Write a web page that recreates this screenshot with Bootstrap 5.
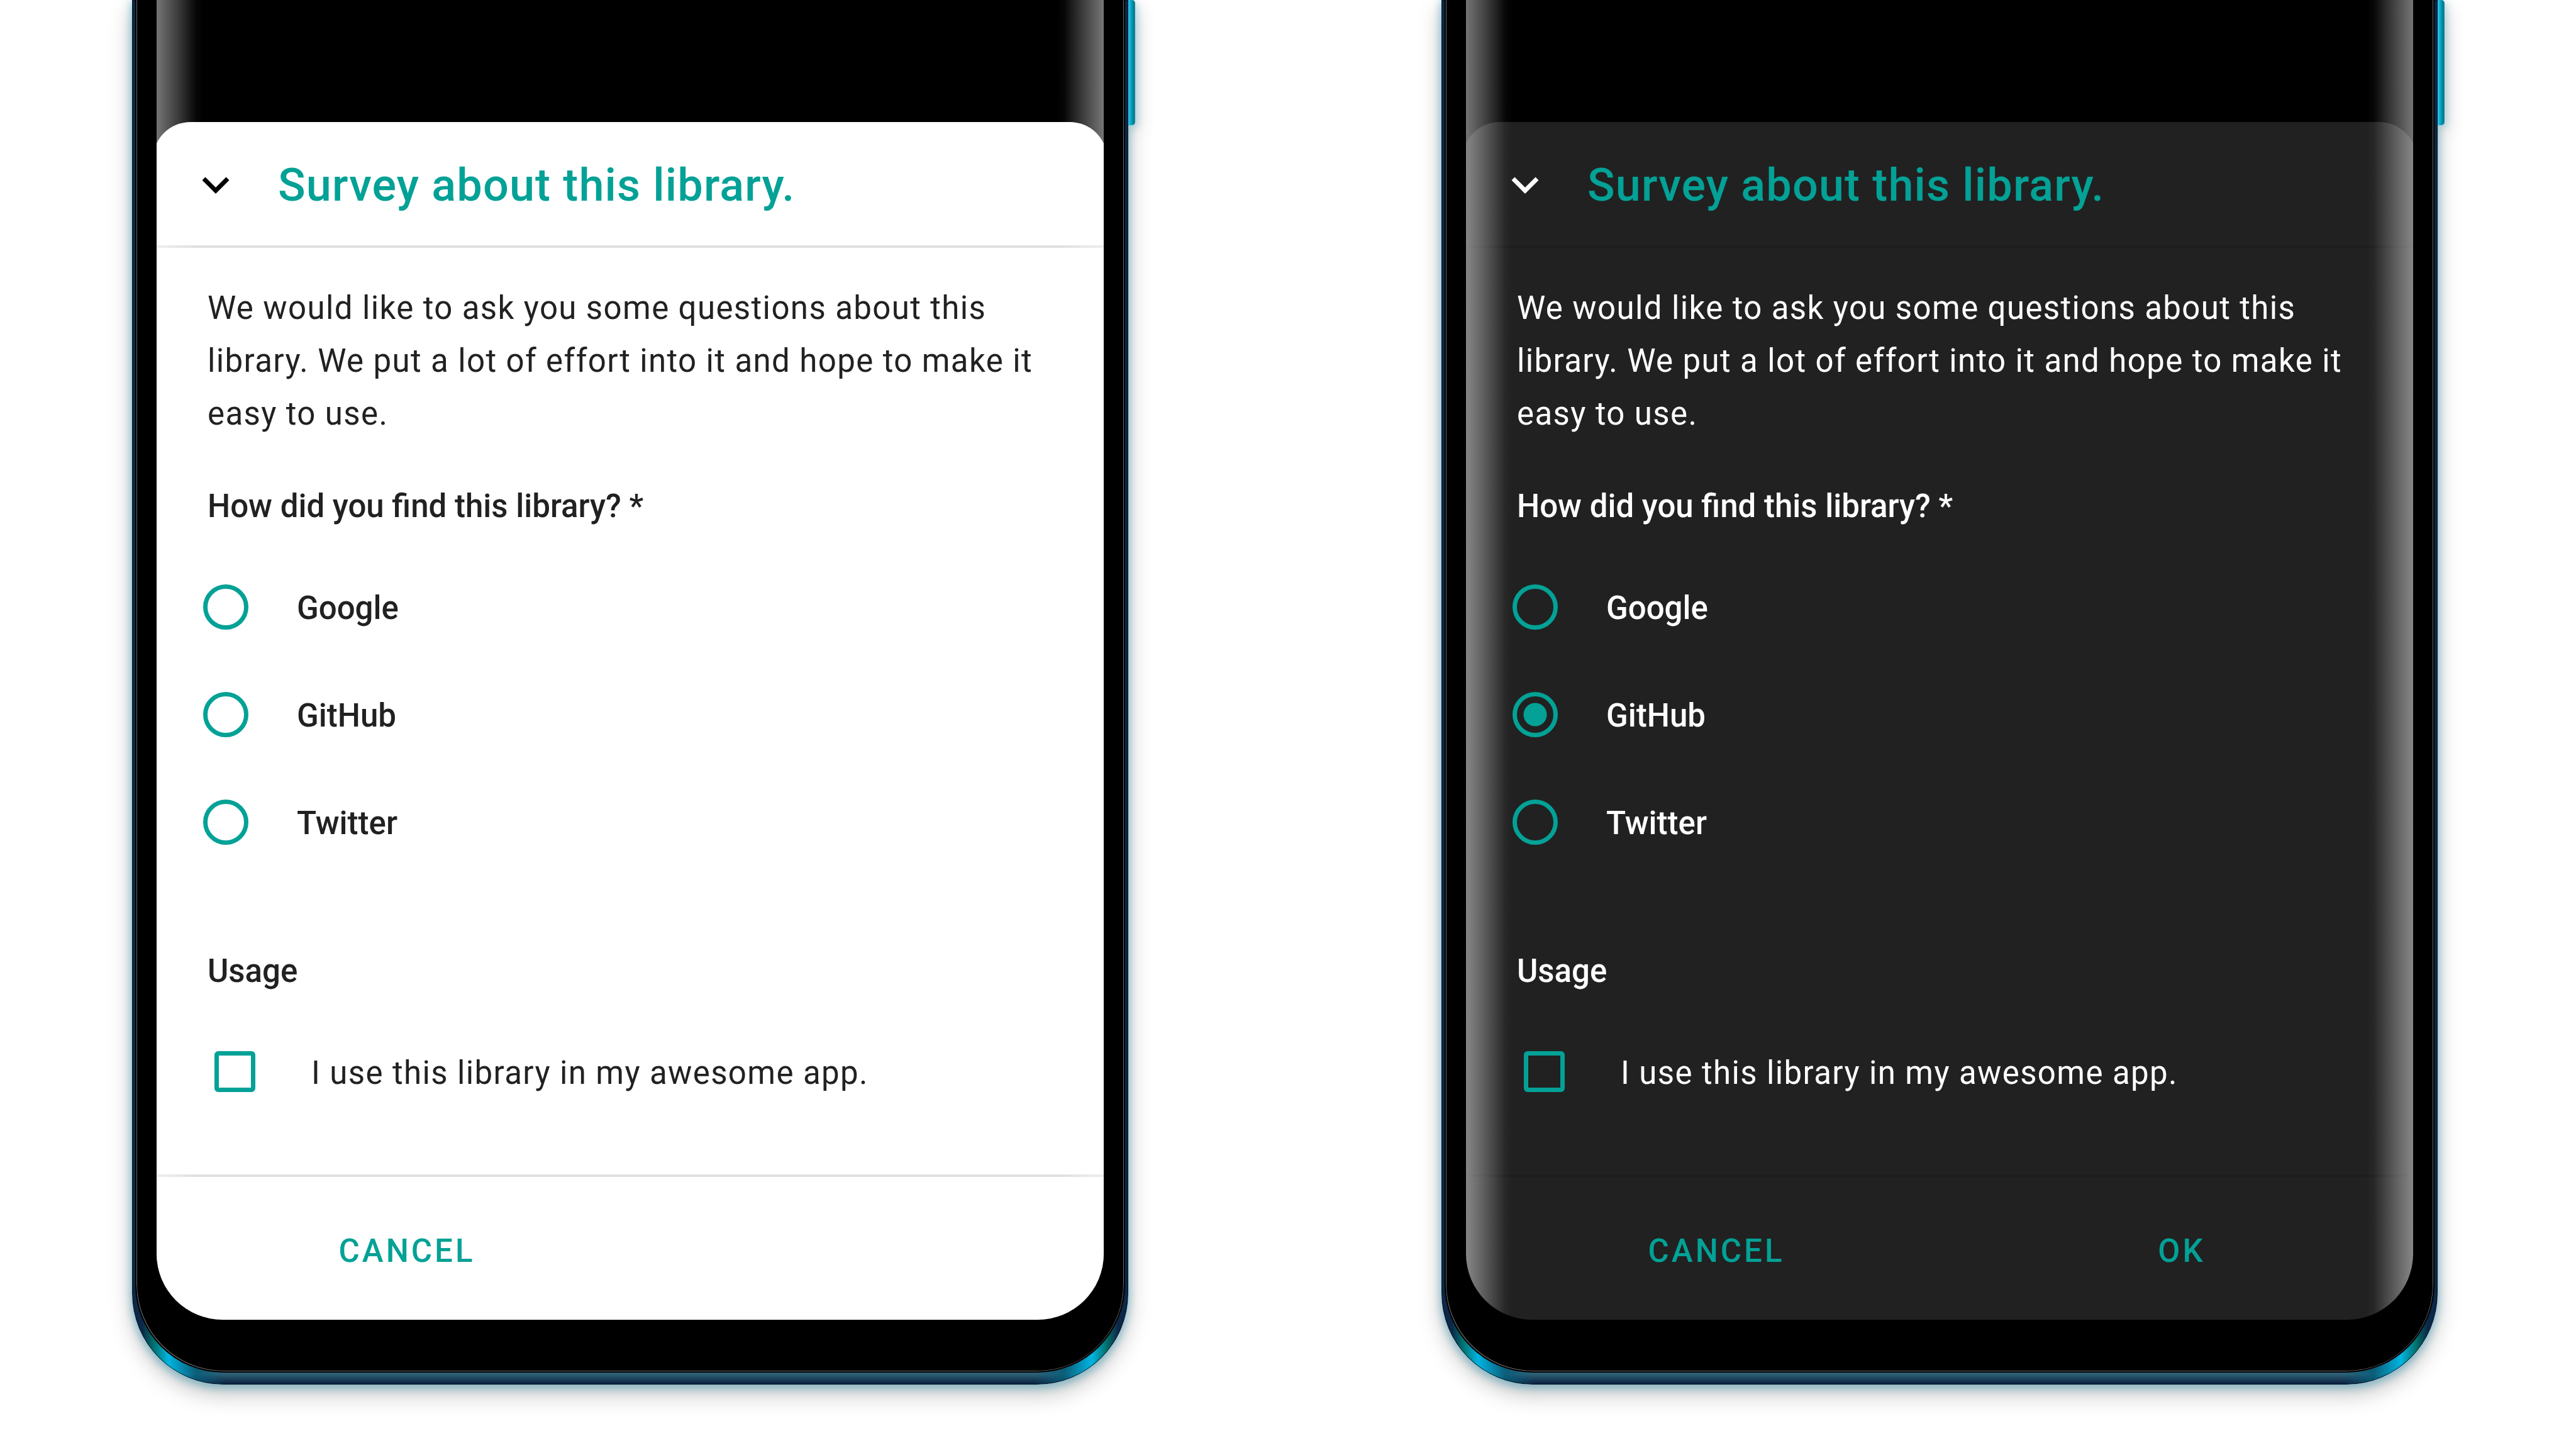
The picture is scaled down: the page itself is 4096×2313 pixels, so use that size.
<!DOCTYPE html>
<html lang="en">
<head>
<meta charset="utf-8">
<meta name="viewport" content="width=device-width, initial-scale=1">
<title>Survey about this library</title>
<link href="https://cdn.jsdelivr.net/npm/bootstrap@5.3.0/dist/css/bootstrap.min.css" rel="stylesheet">
<script src="https://cdn.jsdelivr.net/npm/bootstrap@5.3.0/dist/js/bootstrap.bundle.min.js" defer></script>
<style>
:root { --accent: #03a196; }
body { font-family: Roboto, "Liberation Sans", sans-serif; font-size: 51px; background: #fff; }
.stage { gap: 498px; padding: 0 220px 0 210px; }

/* Device frame */
.phone {
  flex: 1 1 0; border-radius: 0 0 145px 145px; padding: 0 5px 19px;
  background:
    linear-gradient(to right, #0c2748 16px, #00706c 34px, #00b5e2 58px, rgba(4, 93, 122, .8) 102px, transparent 150px) left bottom / 200px 150px no-repeat,
    linear-gradient(to left, #0c2748 16px, #00706c 34px, #00b5e2 58px, rgba(4, 93, 122, .8) 102px, transparent 150px) right bottom / 200px 150px no-repeat,
    linear-gradient(to top, #0c2343 2px, #2f6377 17px, #0c2748 60px);
  box-shadow: inset 0 0 0 1px #06121f, 0 4px 12px 3px rgba(0, 140, 180, .32), 0 14px 36px 0 rgba(0, 0, 0, .26);
}
.power {
  top: 0; left: 100%; width: 11px; height: 199px; border-radius: 0 5px 5px 0;
  background: linear-gradient(to right, #45c3e2, #00a5d0 40%, #007a80 85%, #4a8a9a);
  box-shadow: 4px 4px 12px rgba(0, 140, 180, .25), 6px 10px 30px rgba(0, 0, 0, .12);
}
.bezel {
  border-radius: 0 0 140px 140px; background: #000; padding: 0 32px 82px;
  border: solid #000; border-width: 0 2px 2px; box-shadow: inset 1px -1px 0 #6b6b6b, inset -1px 0 0 #6b6b6b;
}
.screen { border-radius: 0 0 105px 105px; background: #000; padding-top: 194px; overflow: hidden; }
.screen::after {
  content: ""; position: absolute; inset: 0; pointer-events: none;
  --glare: rgba(255, 255, 255, .46), rgba(255, 255, 255, .29) 26px, rgba(255, 255, 255, .14) 47px, rgba(255, 255, 255, .03) 62px, rgba(255, 255, 255, 0) 74px;
  background: linear-gradient(to right, var(--glare)), linear-gradient(to left, var(--glare));
}

/* Survey sheet */
.sheet { margin: 0 -6px; border-radius: 60px 60px 0 0; background: #fff; color: #212121; --rule: #e0e0e0; --chevron: #000; }
.sheet-dark { background: #212121; color: #fff; --rule: #1d1d1d; --chevron: #fff; }
.sheet-head { height: 196px; padding: 5px 67px 0; gap: 66px; }
.sheet .icon-btn { width: 66px; height: 66px; color: var(--chevron); }
.icon-btn svg { width: 66px; height: 66px; }
.sheet-title { font-size: 72px; line-height: 84px; font-weight: 500; letter-spacing: .016em; color: var(--accent); }
.divider { height: 4px; background: var(--rule); }
.sheet-body { padding: 54px 87px 78px; }
.intro { line-height: 84px; letter-spacing: .027em; }
.question { font-size: 51px; line-height: 60px; font-weight: 500; margin: 75px 0 44px; }
.question-next { margin-top: 122px; }
.choice { height: 171px; gap: 77px; margin-left: -7px; font-weight: 500; }
.choice label { padding-top: 4px; line-height: 60px; }
.choice-tick { margin-left: 11px; gap: 89px; letter-spacing: .027em; font-weight: 400; }
.choice .form-check-input { margin: 0; width: 72px; height: 72px; border: 7px solid var(--accent); background-color: transparent; }
.choice .form-check-input[type=checkbox] { width: 65px; height: 65px; border-radius: 6px; }
.choice .form-check-input:checked { background-image: radial-gradient(circle, var(--accent) 18px, transparent 19px); background-size: 100% 100%; }
.actions { height: 227px; padding: 2px 4px 0 34px; }
.actions .btn { font-size: 51px; line-height: 60px; font-weight: 500; letter-spacing: 4px; color: var(--accent); }
</style>
</head>
<body>
<main class="stage d-flex align-items-start min-vh-100">

  <section class="phone position-relative" aria-label="Light theme">
    <div class="power position-absolute"></div>
    <div class="bezel">
      <div class="screen position-relative">
        <form class="sheet">
          <header class="sheet-head d-flex align-items-center">
            <button type="button" class="icon-btn btn p-0 border-0 flex-shrink-0" aria-label="Collapse"><svg class="d-block" viewBox="0 0 66 66"><path d="M14 22 33 41 52 22" fill="none" stroke="currentColor" stroke-width="7"/></svg></button>
            <h1 class="sheet-title m-0">Survey about this library.</h1>
          </header>
          <div class="divider"></div>
          <div class="sheet-body">
            <p class="intro m-0">We would like to ask you some questions about this library. We put a lot of effort into it and hope to make it easy to use.</p>
            <h2 class="question">How did you find this library? *</h2>
            <div class="choice d-flex align-items-center"><input class="form-check-input" type="radio" name="source-light" id="light-google"><label for="light-google">Google</label></div>
            <div class="choice d-flex align-items-center"><input class="form-check-input" type="radio" name="source-light" id="light-github"><label for="light-github">GitHub</label></div>
            <div class="choice d-flex align-items-center"><input class="form-check-input" type="radio" name="source-light" id="light-twitter"><label for="light-twitter">Twitter</label></div>
            <h2 class="question question-next">Usage</h2>
            <div class="choice choice-tick d-flex align-items-center"><input class="form-check-input" type="checkbox" id="light-usage"><label for="light-usage">I use this library in my awesome app.</label></div>
          </div>
          <div class="divider"></div>
          <footer class="actions d-flex align-items-center">
            <div class="w-50 text-center"><button type="button" class="btn p-0 border-0">CANCEL</button></div>
          </footer>
        </form>
      </div>
    </div>
  </section>

  <section class="phone position-relative" aria-label="Dark theme">
    <div class="power position-absolute"></div>
    <div class="bezel">
      <div class="screen position-relative">
        <form class="sheet sheet-dark">
          <header class="sheet-head d-flex align-items-center">
            <button type="button" class="icon-btn btn p-0 border-0 flex-shrink-0" aria-label="Collapse"><svg class="d-block" viewBox="0 0 66 66"><path d="M14 22 33 41 52 22" fill="none" stroke="currentColor" stroke-width="7"/></svg></button>
            <h1 class="sheet-title m-0">Survey about this library.</h1>
          </header>
          <div class="divider"></div>
          <div class="sheet-body">
            <p class="intro m-0">We would like to ask you some questions about this library. We put a lot of effort into it and hope to make it easy to use.</p>
            <h2 class="question">How did you find this library? *</h2>
            <div class="choice d-flex align-items-center"><input class="form-check-input" type="radio" name="source-dark" id="dark-google"><label for="dark-google">Google</label></div>
            <div class="choice d-flex align-items-center"><input class="form-check-input" type="radio" name="source-dark" id="dark-github" checked><label for="dark-github">GitHub</label></div>
            <div class="choice d-flex align-items-center"><input class="form-check-input" type="radio" name="source-dark" id="dark-twitter"><label for="dark-twitter">Twitter</label></div>
            <h2 class="question question-next">Usage</h2>
            <div class="choice choice-tick d-flex align-items-center"><input class="form-check-input" type="checkbox" id="dark-usage"><label for="dark-usage">I use this library in my awesome app.</label></div>
          </div>
          <div class="divider"></div>
          <footer class="actions d-flex align-items-center">
            <div class="w-50 text-center"><button type="button" class="btn p-0 border-0">CANCEL</button></div>
            <div class="w-50 text-center"><button type="submit" class="btn p-0 border-0">OK</button></div>
          </footer>
        </form>
      </div>
    </div>
  </section>

</main>
</body>
</html>
